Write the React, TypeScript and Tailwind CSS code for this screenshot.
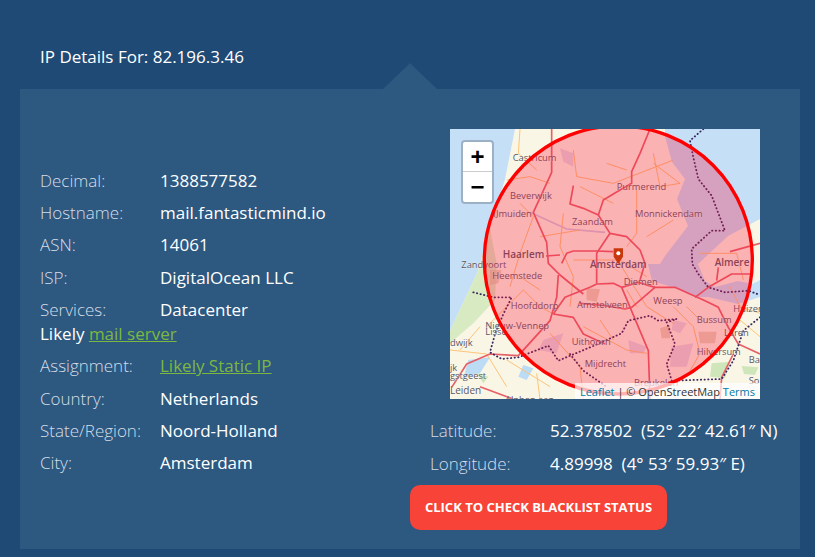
const Row = ({ label, children }: { label: string; children: React.ReactNode }) => (
  <div className="flex h-[32.2px] items-center leading-[26px]">
    <div className="w-[120px] shrink-0 font-light text-[#d5dee8]">{label}</div>
    <div className="whitespace-nowrap text-white">{children}</div>
  </div>
);

const red = [
  "M630 27L600 100L575 155L575 190L540 210L490 240L475 285L430 265L390 252L400 197",
  "M475 285L510 340L470 400L470 490M510 340L560 350L600 390L615 430L600 480",
  "M335 27L335 157L280 277L320 367L325 430L360 465L430 522",
  "M318 408L360 405M365 430L380 400L400 393L470 393L520 395",
  "M450 502L470 492L520 490L545 502L625 692L630 837",
  "M35 802L80 732L150 702L235 707L330 602L350 532L355 465",
  "M340 582L375 532L450 502M420 550L495 557L555 567L575 562L645 502L705 502L795 542L835 562L865 622L895 672L960 702",
  "M545 502L595 487L645 502M765 532L805 502L875 462L935 462M835 442L830 482M870 395L960 370",
  "M340 582L400 592L430 642L495 672M880 702L845 772L840 837M220 837L120 800",
];
const orange = [
  "M400 90L410 170L520 190L700 120M590 210L590 340L560 380M640 130L720 190M300 350L420 330",
  "M240 250L280 290L240 400L210 500M370 280L360 380L400 470L390 560M520 400L620 560L700 610M620 350L700 300",
  "M430 620L560 690L620 700M330 640L420 740L430 837M140 620L200 560L250 510L300 560L340 582M30 690L140 702L200 800",
  "M700 560L760 620L780 700L740 770M870 500L900 560L960 580M290 760L300 837M780 400L890 400L910 480",
  "M240 27L235 100L290 150M200 180L270 170L330 190M400 420L540 420L620 470M240 470L300 510M120 620L60 690M200 720L330 800",
  "M640 100L660 200L720 190M500 130L560 150M420 200L520 250M560 510L590 560M480 600L520 660M740 560L780 600M900 600L960 650",
];

const labels: [string, number, number, number?, number?][] = [
  ["Castricum", 218, 123],
  ["Purmerend", 530, 209],
  ["Beverwijk", 210, 237],
  ["Monnickendam", 585, 290],
  ["IJmuiden", 160, 292],
  ["Zaandam", 396, 316],
  ["Haarlem", 188, 413, 30, 600],
  ["Zandvoort", 64, 443],
  ["Amsterdam", 450, 445, 30, 600],
  ["Almere", 824, 438, 30, 600],
  ["Heemstede", 157, 476],
  ["Diemen", 551, 495],
  ["Weesp", 640, 553],
  ["Hoofddorp", 212, 566],
  ["Amstelveen", 411, 565],
  ["Huizen", 880, 577],
  ["Bussum", 770, 610],
  ["Nieuw-Vennep", 136, 627],
  ["Lisse", 136, 645],
  ["Laren", 852, 648],
  ["Uithoorn", 395, 676],
  ["dwijk", 30, 677],
  ["Hilversum", 770, 704],
  ["Ba", 926, 728],
  ["Mijdrecht", 434, 741],
  ["jk", 30, 752],
  ["gstgeest", 30, 776],
  ["So", 926, 793],
  ["Breukelen", 582, 798],
  ["Leiden", 30, 822, 30, 500],
  ["Alphen aan", 195, 850],
];

function MapArt() {
  return (
    <svg viewBox="30 27 930 810" className="absolute inset-0 h-full w-full">
      <rect x="30" y="27" width="930" height="810" fill="#faf6e6" />
      <path d="M30 27H225L195 177L150 327L114 453L30 633Z" fill="#c4dff6" />
      <path d="M114 453L150 327L170 430L165 540L100 610L30 670L30 633Z" fill="#d8eac2" />
      <path d="M85 720L150 712L120 760L70 775ZM250 735L280 745L260 780L235 770Z" fill="#bcdcf5" />
      <path d="M815 730L870 725L855 775L810 770ZM905 738L955 742L945 765L912 762ZM110 760L145 770L130 790Z" fill="#cfe6bb" />
      <path d="M675 27L675 48L696 126L735 177L711 237L744 318L675 408L660 432L624 432L636 483L696 501L765 531L804 531L894 552L960 531V480L936 492L894 483L825 501L795 483L774 432L864 348L960 297V27Z" fill="#c4dff6" />
      <path d="M360 85L400 100L400 140L370 125ZM565 660L620 680L610 700L570 700ZM700 600L740 610L720 640L695 630ZM310 660L370 640L350 700L295 690ZM695 680L760 670L740 740L690 740Z" fill="#c3b3dc" opacity="0.42" />
      <path d="M775 635L830 635L825 670L780 670ZM660 625L690 615L690 655L665 655ZM150 450L185 450L175 490L150 495ZM440 505L480 508L470 545L440 540Z" fill="#dcc49f" opacity="0.65" />
      <path d="M270 277L380 327L495 337" fill="none" stroke="#bcb4dc" strokeWidth="5" opacity="0.7" />
      {orange.map((d) => (
        <path key={d} d={d} fill="none" stroke="#fdc478" strokeWidth="3" strokeLinejoin="round" />
      ))}
      {red.map((d) => (
        <path key={d} d={d} fill="none" stroke="#e66068" strokeWidth="5" strokeLinejoin="round" />
      ))}
      <g fill="none" stroke="#3a2660" strokeWidth="5.5" strokeLinecap="round" strokeDasharray="1 10">
        <path d="M790 27L750 62L760 112L775 177L815 227L855 332L815 332L755 387L757 432L775 462L805 502L855 517L925 512L960 525" />
        <path d="M100 517L160 532L215 532L190 582L165 642L150 697L185 717L235 712L325 677L355 722L450 682L545 640L565 602L630 587L655 602L710 597L680 607L705 672L680 732L695 782L845 777L880 722L910 632L960 592" />
        <path d="M390 702L430 752L495 797" />
      </g>
      <g fontFamily="'Open Sans', sans-serif">
        {labels.map(([t, x, y, s, w]) => (
          <text key={t} x={x} y={y} fontSize={s ?? 28} fontWeight={w ?? 400} fill="#5a5660" stroke="#ffffff" strokeOpacity="0.35" strokeWidth="3" paintOrder="stroke">
            {t}
          </text>
        ))}
      </g>
      <circle cx="535" cy="420" r="402" fill="#ff143c" fillOpacity="0.3" stroke="#ff0000" strokeWidth="10" />
      <path d="M521 385H549V410L535 432L521 410Z" fill="#c8380c" />
      <circle cx="535" cy="400" r="6" fill="#ffffff" />
    </svg>
  );
}

export default function App() {
  return (
    <div className="min-h-[557px] overflow-hidden bg-[#1f4a75] font-['Open_Sans',sans-serif] text-[17px] text-white">
      <div className="flex h-[89px] items-start px-10 pt-[45px] leading-6">IP Details For: 82.196.3.46</div>
      <div className="relative ml-5 flex h-[460px] w-[780px] bg-[#2d5880]">
        <div className="absolute left-[363px] top-[-26px] h-[26px] w-[54px] bg-[#2d5880] [clip-path:polygon(50%_0,100%_100%,0_100%)]" />
        <div className="w-[390px] pl-5 pt-[75.85px]">
          <Row label="Decimal:">1388577582</Row>
          <Row label="Hostname:">mail.fantasticmind.io</Row>
          <Row label="ASN:">14061</Row>
          <Row label="ISP:">DigitalOcean LLC</Row>
          <Row label="Services:">Datacenter</Row>
          <div className="flex h-[16px] items-center whitespace-nowrap">
            Likely&nbsp;<a className="text-[#7cb83f] underline">mail server</a>
          </div>
          <div className="h-[8.55px]" />
          <Row label="Assignment:"><a className="text-[#7cb83f] underline">Likely Static IP</a></Row>
          <Row label="Country:">Netherlands</Row>
          <Row label="State/Region:">Noord-Holland</Row>
          <Row label="City:">Amsterdam</Row>
        </div>
        <div className="w-[390px] pt-10">
          <div className="relative ml-10 h-[270px] w-[310px] overflow-hidden bg-[#faf6e6]">
            <MapArt />
            <div className="absolute left-[11px] top-[11px] w-[33px] rounded-[4px] border-2 border-[#9db1c6] bg-white text-black">
              <div className="flex h-[30px] items-center justify-center border-b border-[#ccc] font-['Liberation_Sans',sans-serif] text-[24px] font-bold">+</div>
              <div className="flex h-[30px] items-center justify-center font-['Liberation_Sans',sans-serif] text-[24px] font-bold">−</div>
            </div>
            <div className="absolute bottom-0 right-0 flex h-[16px] items-center whitespace-pre bg-white/70 px-[5px] text-[11px] leading-none text-[#333]">
              <a className="text-[#0078a8]">Leaflet</a> | © OpenStreetMap <a className="text-[#0078a8]">Terms</a>
            </div>
          </div>
          <div className="ml-5 mt-[16.4px]">
            <Row label="Latitude:">52.378502&nbsp;&nbsp;(52° 22′ 42.61″ N)</Row>
            <Row label="Longitude:">4.89998&nbsp;&nbsp;(4° 53′ 59.93″ E)</Row>
          </div>
          <button className="mt-[5.6px] flex h-[45px] w-[257px] items-center justify-center rounded-[10px] bg-[#f74338] text-[13px] font-bold text-white">
            CLICK TO CHECK BLACKLIST STATUS
          </button>
        </div>
      </div>
    </div>
  );
}
